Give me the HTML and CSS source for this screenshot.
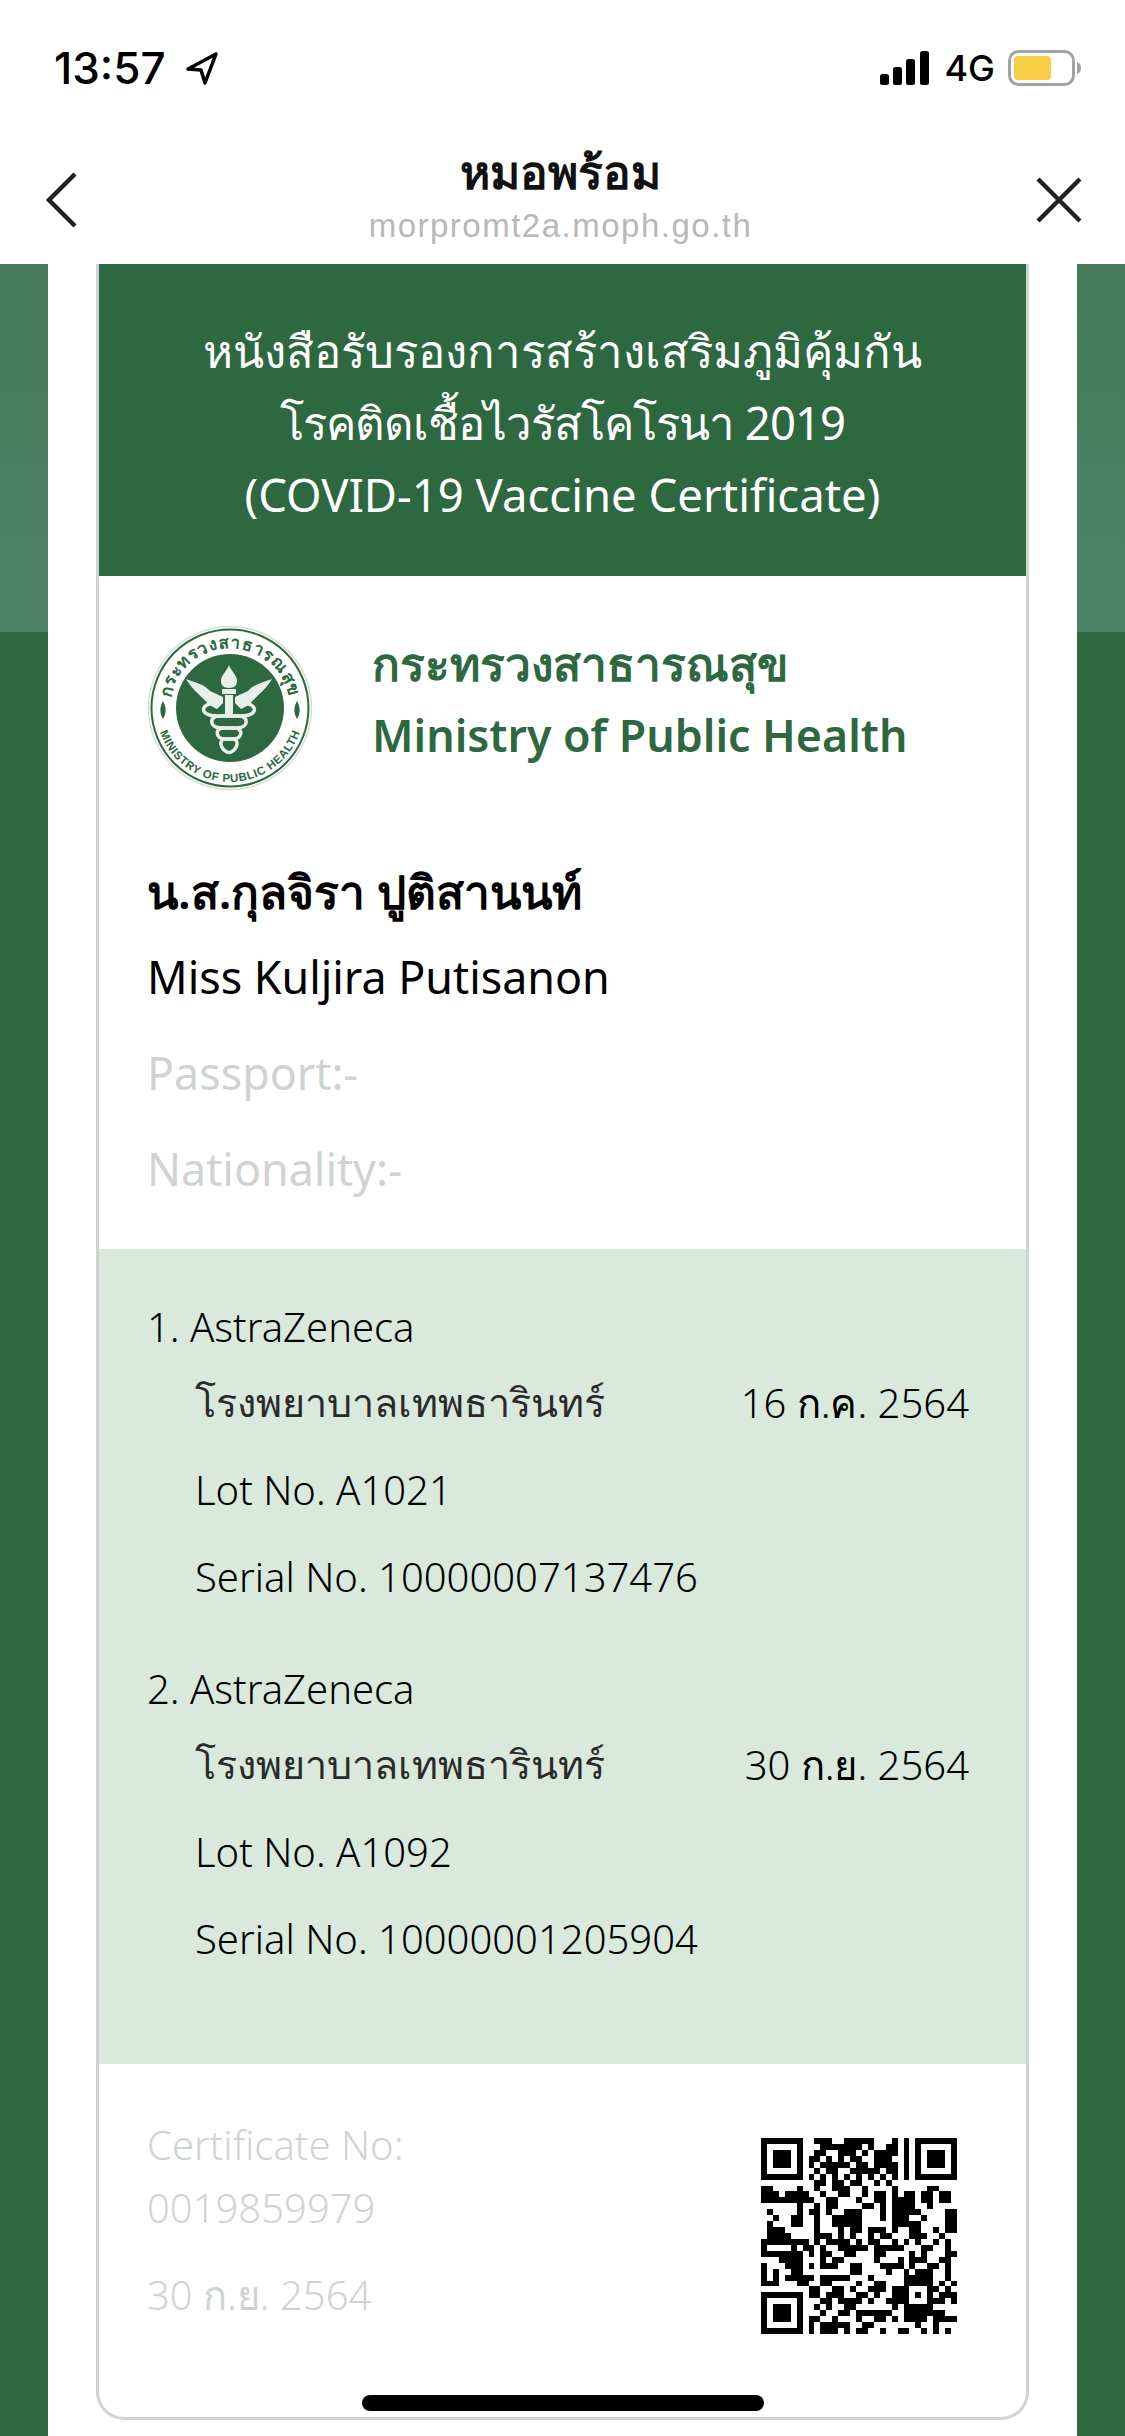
FILE: index.html
```html
<!DOCTYPE html>
<html lang="th">
<head>
    <meta charset="UTF-8">
    <meta name="viewport" content="width=device-width, initial-scale=1.0">
    <title>หมอพร้อม</title>
    <link rel="stylesheet" href="styles.css">
</head>
<body>
    <div class="screen">
        <div class="status-bar">
            <div class="status-left">
                <span class="clock">13:57</span>
                <svg class="location" width="36" height="36" viewBox="0 0 36 36">
                    <path d="M32 4 L4 19 L17 20 L21 33 Z" fill="none" stroke="#000" stroke-width="3.5" stroke-linejoin="round"/>
                </svg>
            </div>
            <div class="status-right">
                <svg width="52" height="34" viewBox="0 0 52 34">
                    <rect x="1" y="23" width="9" height="11" rx="2.5"/>
                    <rect x="14" y="16" width="9" height="18" rx="2.5"/>
                    <rect x="27" y="8" width="9" height="26" rx="2.5"/>
                    <rect x="41" y="0" width="9" height="34" rx="2.5"/>
                </svg>
                <span class="network">4G</span>
                <svg width="74" height="36" viewBox="0 0 74 36">
                    <rect x="1.5" y="1.5" width="64" height="33" rx="9" fill="none" stroke="#a3a3a3" stroke-width="3"/>
                    <rect x="6" y="6" width="37" height="24" rx="4" fill="#f8ce46"/>
                    <path d="M69 12 C72 13 73 15 73 18 C73 21 72 23 69 24 Z" fill="#a3a3a3"/>
                </svg>
            </div>
        </div>

        <div class="nav-bar">
            <svg class="nav-icon" width="36" height="60" viewBox="0 0 36 60">
                <path d="M31 4 L5 30 L31 56" fill="none" stroke="#222" stroke-width="4.5"/>
            </svg>
            <div class="nav-title">
                <div class="app-name">หมอพร้อม</div>
                <div class="app-url">morpromt2a.moph.go.th</div>
            </div>
            <svg class="nav-icon" width="48" height="48" viewBox="0 0 48 48">
                <path d="M3 3 L45 45 M45 3 L3 45" fill="none" stroke="#222" stroke-width="4.5"/>
            </svg>
        </div>

        <div class="backdrop">
            <div class="sheet">
                <div class="card">
                    <div class="card-head">
                        <div>หนังสือรับรองการสร้างเสริมภูมิคุ้มกัน</div>
                        <div class="head-tight">โรคติดเชื้อไวรัสโคโรนา 2019</div>
                        <div>(COVID-19 Vaccine Certificate)</div>
                    </div>

                    <div class="ministry">
                        <svg class="seal" width="166" height="166" viewBox="0 0 166 166">
                            <defs>
                                <path id="seal-top" d="M26.6 103.5 A60 60 0 1 1 139.4 103.5"/>
                                <path id="seal-bottom" d="M9 83 A74 74 0 0 0 157 83"/>
                            </defs>
                            <circle cx="83" cy="83" r="81.5" fill="#fff" stroke="#d5ded8" stroke-width="1.5"/>
                            <circle cx="83" cy="83" r="78.5" fill="none" stroke="#2d6840" stroke-width="2"/>
                            <circle cx="83" cy="83" r="54" fill="#2d6840"/>
                            <text class="seal-thai"><textPath href="#seal-top" startOffset="50%" text-anchor="middle">กระทรวงสาธารณสุข</textPath></text>
                            <text class="seal-latin"><textPath href="#seal-bottom" startOffset="50%" text-anchor="middle">MINISTRY OF PUBLIC HEALTH</textPath></text>
                            <path d="M16 76 C12 83 13 89 16 94 C19 89 20 83 16 76 Z M150 76 C146 83 147 89 150 94 C153 89 154 83 150 76 Z" fill="#2d6840"/>
                            <!-- torch, wings and snakes -->
                            <g fill="#e8efe9">
                                <path d="M82 40 C80 46 74 50 74 56 C74 60 76 63 82 63 C88 63 90 60 90 56 C90 50 84 46 82 40 Z"/>
                                <rect x="75" y="64" width="14" height="5"/>
                                <rect x="78" y="70" width="8" height="22"/>
                                <path d="M39 54 C50 58 58 60 63 66 L76 72 L76 78 L70 84 L62 80 C56 72 46 66 39 54 Z"/>
                                <path d="M125 54 C114 58 106 60 101 66 L88 72 L88 78 L94 84 L102 80 C108 72 118 66 125 54 Z"/>
                            </g>
                            <g fill="none" stroke="#e8efe9" stroke-width="3.5">
                                <path d="M70 78 C52 78 52 91 70 91 L92 91 C102 91 102 103 90 103 L76 103 C68 103 68 114 78 114 L86 114 C92 114 92 124 82 128"/>
                                <path d="M94 78 C112 78 112 91 94 91 L72 91 C62 91 62 103 74 103 L88 103 C96 103 96 114 86 114 L78 114 C72 114 72 124 82 128"/>
                            </g>
                        </svg>
                        <div class="ministry-name">
                            <div class="ministry-th">กระทรวงสาธารณสุข</div>
                            <div>Ministry of Public Health</div>
                        </div>
                    </div>

                    <div class="person">
                        <div class="name-th">น.ส.กุลจิรา ปูติสานนท์</div>
                        <div class="name-en">Miss Kuljira Putisanon</div>
                        <div class="muted-line">Passport:-</div>
                        <div class="muted-line">Nationality:-</div>
                    </div>

                    <div class="doses">
                        <div class="dose">
                            <div class="dose-name">1. AstraZeneca</div>
                            <div class="dose-row"><span class="hospital">โรงพยาบาลเทพธารินทร์</span><span>16 ก.ค. 2564</span></div>
                            <div class="dose-row">Lot No. A1021</div>
                            <div class="dose-row">Serial No. 10000007137476</div>
                        </div>
                        <div class="dose">
                            <div class="dose-name">2. AstraZeneca</div>
                            <div class="dose-row"><span class="hospital">โรงพยาบาลเทพธารินทร์</span><span>30 ก.ย. 2564</span></div>
                            <div class="dose-row">Lot No. A1092</div>
                            <div class="dose-row">Serial No. 10000001205904</div>
                        </div>
                    </div>

                    <div class="cert">
                        <div class="cert-info">
                            <div>Certificate No:</div>
                            <div>0019859979</div>
                            <div class="cert-date">30 ก.ย. 2564</div>
                        </div>
                        <svg id="qr" class="qr" width="196" height="196" viewBox="0 0 33 33" shape-rendering="crispEdges"></svg>
                    </div>
                </div>
            </div>
        </div>

        <div class="home-indicator"></div>
    </div>
    <script src="qr.js"></script>
</body>
</html>
```

FILE: styles.css
```css
body {
    margin: 0;
    font-family: "Noto Sans", "Open Sans", sans-serif;
    color: #000;
}

.screen {
    position: relative;
    width: 1125px;
    height: 2436px;
    display: flex;
    flex-direction: column;
    overflow: hidden;
    background-color: #fff;
}

.status-bar {
    height: 136px;
    padding: 0 43px 0 54px;
    box-sizing: border-box;
    display: flex;
    justify-content: space-between;
    align-items: center;
    flex-shrink: 0;
}

.status-left,
.status-right {
    display: flex;
    align-items: center;
}

.clock {
    font-family: Inter, "Liberation Sans", sans-serif;
    font-size: 44px;
    font-weight: 500;
    line-height: 48px;
}

.location {
    margin-left: 18px;
}

.network {
    margin: 0 13px;
    font-family: Inter, "Liberation Sans", sans-serif;
    font-size: 36px;
    font-weight: 500;
    line-height: 40px;
}

.nav-bar {
    height: 128px;
    padding: 0 42px 0 44px;
    box-sizing: border-box;
    display: flex;
    justify-content: space-between;
    align-items: center;
    flex-shrink: 0;
}

.nav-title {
    margin-left: 6px;
    padding-bottom: 16px;
    text-align: center;
}

.app-name {
    font-size: 46px;
    font-weight: 700;
    line-height: 67px;
    color: #111;
}

.app-url {
    font-family: "Liberation Sans", sans-serif;
    font-size: 33px;
    line-height: 42px;
    letter-spacing: 1.5px;
    color: #b8b8b8;
}

.backdrop {
    flex: 1;
    padding: 0 48px;
    background: linear-gradient(#457b5b 0, #4c8465 368px, #2d6840 368px);
}

.sheet {
    height: 100%;
    padding: 0 48px 16px;
    box-sizing: border-box;
    background-color: #fff;
}

.card {
    height: 100%;
    box-sizing: border-box;
    border: 3px solid #cdd4d1;
    border-top: none;
    border-radius: 0 0 28px 28px;
    overflow: hidden;
    display: flex;
    flex-direction: column;
}

.card-head {
    height: 312px;
    padding-top: 50px;
    box-sizing: border-box;
    flex-shrink: 0;
    background-color: #2d6840;
    color: #fff;
    text-align: center;
    font-size: 45.5px;
    line-height: 72px;
}

.head-tight {
    letter-spacing: -1px;
}

.ministry {
    padding: 49px 48px 0;
    display: flex;
    align-items: center;
    gap: 59px;
}

.seal {
    flex-shrink: 0;
}

.seal-thai {
    font-size: 17px;
    font-weight: 700;
    letter-spacing: 1px;
    fill: #2d6840;
}

.seal-latin {
    font-family: "Liberation Sans", sans-serif;
    font-size: 11.5px;
    font-weight: 700;
    letter-spacing: 0.6px;
    fill: #2d6840;
}

.ministry-name {
    padding-bottom: 18px;
    color: #2d6840;
    font-size: 44.7px;
    font-weight: 600;
    line-height: 72px;
}

.ministry-th {
    font-size: 46px;
    font-weight: 700;
}

.person {
    padding: 62px 48px 0;
    height: 458px;
    box-sizing: border-box;
    flex-shrink: 0;
    font-size: 44.8px;
}

.name-th {
    font-size: 46px;
    font-weight: 600;
    line-height: 76px;
}

.name-en {
    line-height: 96px;
}

.muted-line {
    line-height: 96px;
    color: #cfd4d2;
}

.doses {
    height: 815px;
    padding: 46px 57px 0 48px;
    box-sizing: border-box;
    flex-shrink: 0;
    background-color: #d9eadc;
    font-size: 40px;
    font-weight: 300;
}

.dose {
    margin-bottom: 37px;
}

.dose-name {
    line-height: 64px;
}

.dose-row {
    padding-left: 48px;
    display: flex;
    justify-content: space-between;
    line-height: 87px;
}

.hospital {
    font-size: 39.5px;
    font-weight: 400;
    color: #2a2a2a;
}

.cert {
    padding: 49px 69px 0 48px;
    display: flex;
    justify-content: space-between;
    align-items: flex-start;
}

.cert-info {
    font-size: 40px;
    font-weight: 300;
    line-height: 63px;
    color: #cfd4d2;
}

.cert-date {
    margin-top: 24px;
}

.qr {
    margin-top: 25px;
}

.home-indicator {
    position: absolute;
    left: 362px;
    bottom: 25px;
    width: 402px;
    height: 16px;
    border-radius: 8px;
    background-color: #000;
}
```

FILE: qr.js
```js
// Modules of the certificate's QR code, one string per row
const rows = [
    '111111100111001111100010101111111',
    '100000100011111110100110101000001',
    '101110100110011101011110101011101',
    '101110101101010110011100101011101',
    '101110101011111011011110101011101',
    '100000100101100111110110101000001',
    '111111101010101010101010101111111',
    '000000000110110110010100000000000',
    '110000100100111001000010000011000',
    '111011110010011001011010110110110',
    '111111111001100010011011110110110',
    '000000100101100001101011110010000',
    '010000101101001110001011111000011',
    '001001100100111110001011100100011',
    '010001100100111110000011111000011',
    '011100000100010110111010011001011',
    '011110000111010100101100011100100',
    '111111110101111010110010101001010',
    '100001011010011111011111000110010',
    '111111101011001100011000010100011',
    '000111100010110000010001011100110',
    '100011101011100110001111010011010',
    '101001100000000110000100101110010',
    '101011111011111000100000111110010',
    '111000110011000010011000111110101',
    '000000001100110100111011100011010',
    '111111101101110011010011101010111',
    '100000100011011110100111100011101',
    '101110100101001100000010111110000',
    '101110100010011011111100111111100',
    '101110101100100010011010111101111',
    '100000101011111001100000001001000',
    '111111101011101011001001100101010'
];

const qr = document.getElementById('qr');
let d = '';
rows.forEach(function (row, y) {
    for (let x = 0; x < row.length; x++) {
        if (row[x] === '1') {
            d += 'M' + x + ' ' + y + 'h1v1h-1z';
        }
    }
});

const path = document.createElementNS('http://www.w3.org/2000/svg', 'path');
path.setAttribute('d', d);
qr.appendChild(path);
```
